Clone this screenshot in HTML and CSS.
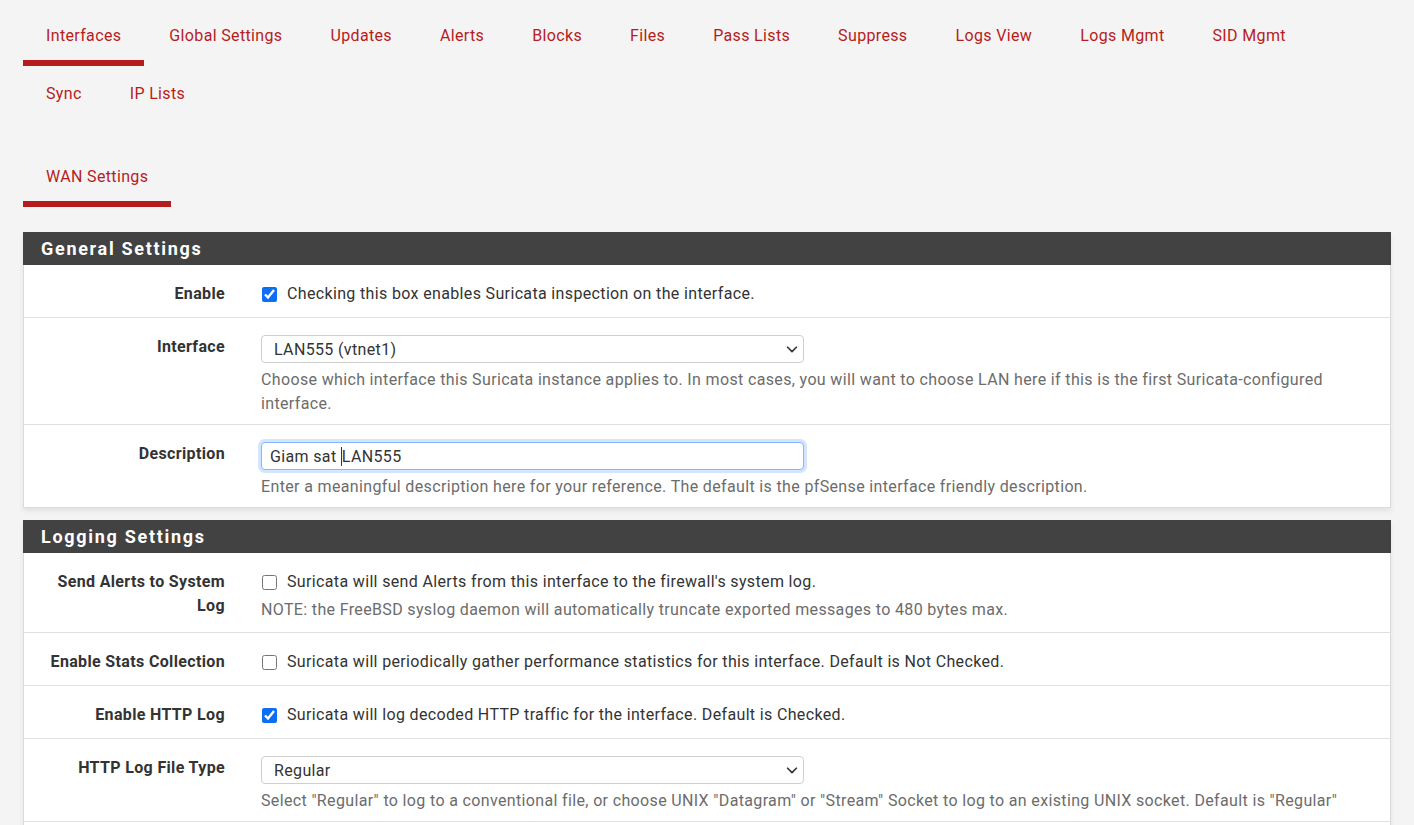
FILE: index.html
```html
<!DOCTYPE html>
<html lang="en">
<head>
<meta charset="utf-8">
<title>Suricata Interface Settings</title>
<link rel="stylesheet" href="styles.css">
</head>
<body>
<div class="page">
  <ul class="tabs">
    <li><a class="active" href="#">Interfaces</a></li>
    <li><a href="#">Global Settings</a></li>
    <li><a href="#">Updates</a></li>
    <li><a href="#">Alerts</a></li>
    <li><a href="#">Blocks</a></li>
    <li><a href="#">Files</a></li>
    <li><a href="#">Pass Lists</a></li>
    <li><a href="#">Suppress</a></li>
    <li><a href="#">Logs View</a></li>
    <li><a href="#">Logs Mgmt</a></li>
    <li><a href="#">SID Mgmt</a></li>
    <li><a href="#">Sync</a></li>
    <li><a href="#">IP Lists</a></li>
  </ul>
  <ul class="tabs subtabs">
    <li><a class="active" href="#">WAN Settings</a></li>
  </ul>

  <section class="panel">
    <h2 class="panel-heading">General Settings</h2>
    <div class="panel-body">
      <div class="row">
        <div class="label">Enable</div>
        <div class="field">
          <label class="check"><input type="checkbox" checked> Checking this box enables Suricata inspection on the interface.</label>
        </div>
      </div>
      <div class="row">
        <div class="label">Interface</div>
        <div class="field">
          <div class="select">LAN555 (vtnet1)<svg class="chev" viewBox="0 0 16 16" width="14" height="14"><path d="M3 6l5 5 5-5" fill="none" stroke="#343a40" stroke-width="2" stroke-linecap="round" stroke-linejoin="round"/></svg></div>
          <p class="help">Choose which interface this Suricata instance applies to. In most cases, you will want to choose LAN here if this is the first Suricata-configured interface.</p>
        </div>
      </div>
      <div class="row">
        <div class="label">Description</div>
        <div class="field">
          <div class="input focus">Giam sat&nbsp;<span class="caret"></span>LAN555</div>
          <p class="help">Enter a meaningful description here for your reference. The default is the pfSense interface friendly description.</p>
        </div>
      </div>
    </div>
  </section>

  <section class="panel">
    <h2 class="panel-heading">Logging Settings</h2>
    <div class="panel-body">
      <div class="row">
        <div class="label">Send Alerts to System Log</div>
        <div class="field">
          <label class="check"><input type="checkbox"> Suricata will send Alerts from this interface to the firewall's system log.</label>
          <p class="help">NOTE: the FreeBSD syslog daemon will automatically truncate exported messages to 480 bytes max.</p>
        </div>
      </div>
      <div class="row">
        <div class="label">Enable Stats Collection</div>
        <div class="field">
          <label class="check"><input type="checkbox"> Suricata will periodically gather performance statistics for this interface. Default is Not Checked.</label>
        </div>
      </div>
      <div class="row">
        <div class="label">Enable HTTP Log</div>
        <div class="field">
          <label class="check"><input type="checkbox" checked> Suricata will log decoded HTTP traffic for the interface. Default is Checked.</label>
        </div>
      </div>
      <div class="row">
        <div class="label">HTTP Log File Type</div>
        <div class="field">
          <div class="select">Regular<svg class="chev" viewBox="0 0 16 16" width="14" height="14"><path d="M3 6l5 5 5-5" fill="none" stroke="#343a40" stroke-width="2" stroke-linecap="round" stroke-linejoin="round"/></svg></div>
          <p class="help">Select "Regular" to log to a conventional file, or choose UNIX "Datagram" or "Stream" Socket to log to an existing UNIX socket. Default is "Regular"</p>
        </div>
      </div>
      <div class="row">
        <div class="label">&nbsp;</div>
        <div class="field"></div>
      </div>
    </div>
  </section>
</div>
</body>
</html>
```

FILE: styles.css
```css
* { box-sizing: border-box; }
html, body { margin: 0; padding: 0; }
body {
  background: #f4f4f4;
  font-family: Roboto, "Liberation Sans", Arial, sans-serif;
  font-size: 16px;
  letter-spacing: 0.35px;
  color: #212529;
}
.page { padding: 0 23px; }

.tabs {
  list-style: none;
  margin: 8px 0 0 0;
  padding: 0;
  display: flex;
  flex-wrap: wrap;
}
.tabs li { margin-right: 2px; }
.tabs a {
  display: block;
  padding: 18px 23px 14px;
  line-height: 20px;
  font-size: 16px;
  color: #b71c1c;
  text-decoration: none;
  border-bottom: 6px solid transparent;
}
.tabs a.active { border-bottom-color: #b71c1c; }
.subtabs { margin-top: 25px; }

.panel {
  margin-top: 25px;
  background: #fff;
  border: 1px solid #dcdcdc;
  border-top: 0;
  box-shadow: 0 3px 5px rgba(0,0,0,0.08);
}
.panel + .panel { margin-top: 12px; }
.panel-heading {
  background: #424242;
  color: #fff;
  font-size: 18px;
  font-weight: 700;
  letter-spacing: 1.7px;
  line-height: 33px;
  height: 33px;
  padding: 0 18px;
  margin: 0 -1px;
}
.row {
  display: grid;
  grid-template-columns: 216px 1fr;
  padding: 16px 0 8px;
  border-bottom: 1px solid #e0e0e0;
}
.row:last-child { border-bottom: 0; }
.label {
  text-align: right;
  font-weight: 700;
  color: #333;
  line-height: 24px;
  padding: 1px 15px 0;
}
.field { padding-left: 21px; padding-right: 15px; }
.check {
  display: flex;
  align-items: center;
  line-height: 26px;
  margin-bottom: 2px;
  color: #333;
}
.check input {
  flex: none;
  width: 15px;
  height: 15px;
  margin: 0 10px 0 1px;
  accent-color: #0b6ef5;
}
.help {
  margin: 5px 0 0;
  line-height: 24px;
  color: #6c6c6c;
}
.check + .help { margin-top: 3px; padding-bottom: 2px; }
.select, .input {
  width: 543px;
  height: 28px;
  margin-top: 1px;
  border: 1px solid #cfcfcf;
  border-radius: 4px;
  background: #fff;
  color: #333;
  display: flex;
  align-items: center;
  position: relative;
}
.select { padding-left: 12px; }
.chev { position: absolute; right: 4px; top: 6px; }
.input { padding-left: 8px; }
.input.focus {
  border-color: #86b7fe;
  box-shadow: 0 0 0 3px rgba(13,110,253,0.18);
}
.caret {
  display: inline-block;
  width: 1px;
  height: 19px;
  background: #333;
  margin: 0;
}
```
